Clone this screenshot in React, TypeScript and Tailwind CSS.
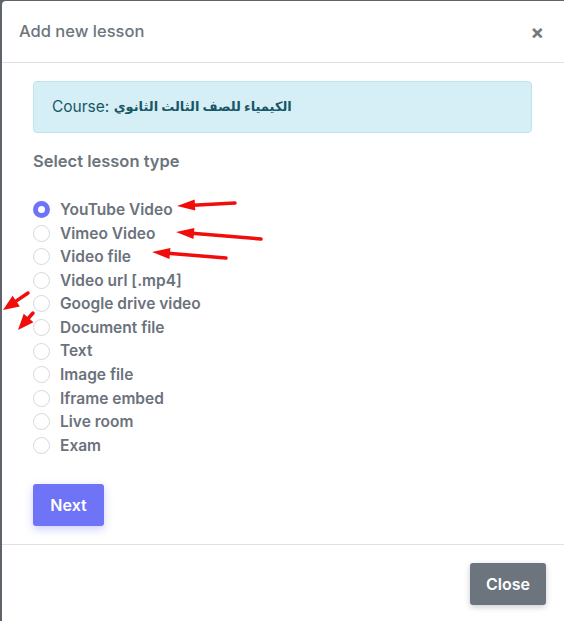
import React from "react";

const types = [
  "YouTube Video",
  "Vimeo Video",
  "Video file",
  "Video url [.mp4]",
  "Google drive video",
  "Document file",
  "Text",
  "Image file",
  "Iframe embed",
  "Live room",
  "Exam",
];

function Arrow({ x1, y1, x2, y2, hl = 18, hw = 5.5 }: { x1: number; y1: number; x2: number; y2: number; hl?: number; hw?: number }) {
  const dx = x2 - x1;
  const dy = y2 - y1;
  const len = Math.sqrt(dx * dx + dy * dy);
  const ux = dx / len;
  const uy = dy / len;
  const bx = x2 - ux * hl;
  const by = y2 - uy * hl;
  const px = -uy;
  const py = ux;
  const pts = `${x2},${y2} ${bx + px * hw},${by + py * hw} ${bx - px * hw},${by - py * hw}`;
  return (
    <g>
      <line x1={x1} y1={y1} x2={bx + ux * 2} y2={by + uy * 2} stroke="#f20d0d" strokeWidth={3.5} strokeLinecap="round" />
      <polygon points={pts} fill="#f20d0d" />
    </g>
  );
}

export default function App() {
  return (
    <div
      className="relative w-[564px] h-[621px] overflow-hidden bg-[#5f646b] pl-[2px] pt-[1px]"
      style={{ fontFamily: "Inter, 'DejaVu Sans', sans-serif" }}
    >
      <div className="flex h-[640px] w-[562px] flex-col rounded-tl-[4px] bg-white">
        <div className="flex h-[62px] items-center justify-between border-b border-[#dee2e6] pl-[17px] pr-[20px]">
          <h5 className="text-[16.5px] font-medium text-[#6c757d]">Add new lesson</h5>
          <span className="text-[20px] font-bold leading-none text-[#777]">×</span>
        </div>
        <div className="flex flex-col pl-[31px] pt-[18px] pb-[18px]">
          <div className="flex h-[52px] w-[499px] items-center rounded-[4px] border border-[#bee5eb] bg-[#d6eef5] pl-[18px] text-[15.5px] text-[#175766]">
            <span>Course:&nbsp;</span>
            <span className="text-[13px] font-bold" dir="rtl">الكيمياء للصف الثالث الثانوي</span>
          </div>
          <div className="mt-[16px] text-[16.5px] font-semibold text-[#6c757d]">Select lesson type</div>
          <div className="mt-[24px] flex flex-col">
            {types.map((t, i) => (
              <label key={t} className="flex h-[23.6px] items-center gap-[10px]">
                {i === 0 ? (
                  <span className="flex h-[17px] w-[17px] items-center justify-center rounded-full bg-[#6e74f5]">
                    <span className="h-[7px] w-[7px] rounded-full bg-white" />
                  </span>
                ) : (
                  <span className="h-[17px] w-[17px] rounded-full border border-[#d6d8dc] bg-white" />
                )}
                <span className="text-[15.5px] font-semibold text-[#6b727c]">{t}</span>
              </label>
            ))}
          </div>
          <button className="mt-[27px] h-[42px] w-[71px] rounded-[3px] bg-[#6e74f5] text-[16px] font-semibold text-white shadow-[0_3px_8px_rgba(110,116,245,0.35)]">
            Next
          </button>
        </div>
        <div className="flex justify-end border-t border-[#dee2e6] pr-[18px] pt-[18px]">
          <button className="h-[42px] w-[76px] rounded-[3px] bg-[#6c757d] text-[16px] font-semibold text-white shadow-[0_2px_6px_rgba(0,0,0,0.2)]">
            Close
          </button>
        </div>
      </div>
      <svg className="pointer-events-none absolute left-0 top-0" width={564} height={621}>
        <Arrow x1={235} y1={203} x2={177} y2={206} />
        <Arrow x1={261} y1={239} x2={176} y2={232} />
        <Arrow x1={226} y1={258} x2={152} y2={252} />
        <Arrow x1={28} y1={293} x2={3} y2={310} hl={16} hw={6.5} />
        <Arrow x1={33} y1={313} x2={18} y2={330} hl={16} hw={6.5} />
      </svg>
    </div>
  );
}
